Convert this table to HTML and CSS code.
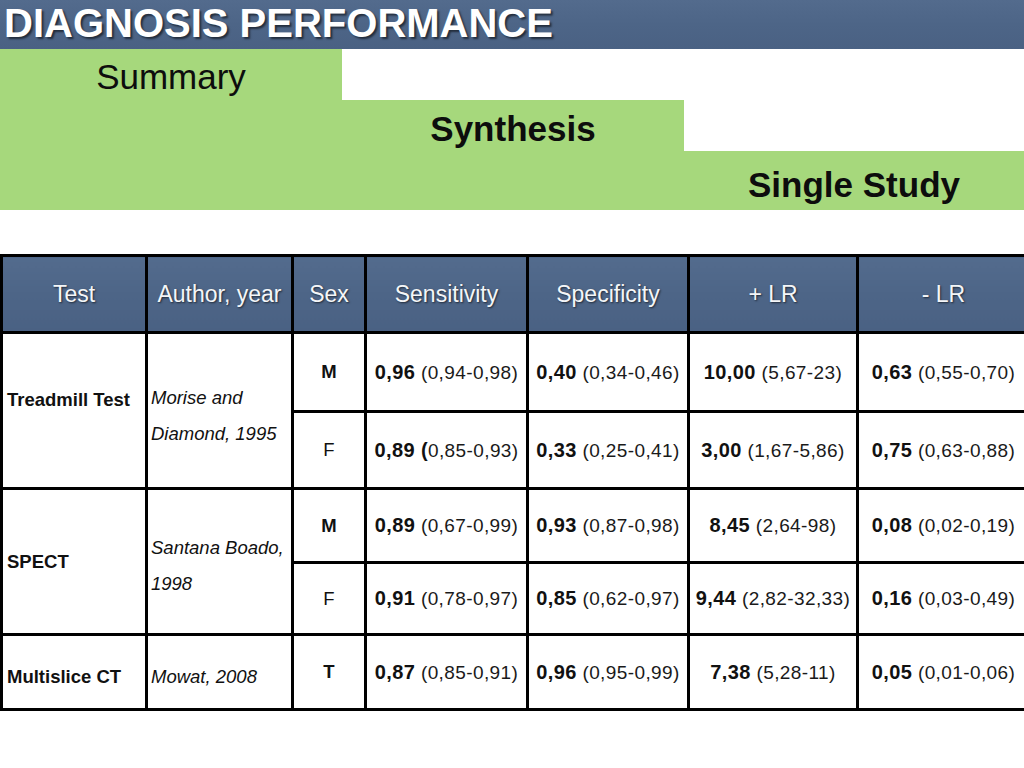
FILE: index.html
```html
<!DOCTYPE html>
<html>
<head>
<meta charset="utf-8">
<title>Diagnosis Performance</title>
<link rel="stylesheet" href="styles.css">
</head>
<body>
<header class="titlebar"><h1 class="title">DIAGNOSIS PERFORMANCE</h1></header>
<section class="steps">
  <div class="step step-1">
    <div class="cell green"><span class="label label-regular">Summary</span></div>
    <div class="cell"></div>
    <div class="cell"></div>
  </div>
  <div class="step step-2">
    <div class="cell green"></div>
    <div class="cell green"><span class="label">Synthesis</span></div>
    <div class="cell"></div>
  </div>
  <div class="step step-3">
    <div class="cell green"></div>
    <div class="cell green"></div>
    <div class="cell green"><span class="label">Single Study</span></div>
  </div>
</section>
<table class="data">
  <colgroup>
    <col class="c-test"><col class="c-author"><col class="c-sex"><col class="c-sens"><col class="c-spec"><col class="c-plr"><col class="c-nlr">
  </colgroup>
  <thead>
    <tr class="r-head">
      <th>Test</th><th>Author, year</th><th>Sex</th><th>Sensitivity</th><th>Specificity</th><th>+ LR</th><th>- LR</th>
    </tr>
  </thead>
  <tbody>
    <tr class="r-1">
      <td class="test test-tm" rowspan="2">Treadmill Test</td>
      <td class="author author-tm" rowspan="2">Morise and<br>Diamond, 1995</td>
      <td class="sex bold">M</td>
      <td class="val"><b>0,96</b> (0,94-0,98)</td>
      <td class="val"><b>0,40</b> (0,34-0,46)</td>
      <td class="val"><b>10,00</b> (5,67-23)</td>
      <td class="val"><b>0,63</b> (0,55-0,70)</td>
    </tr>
    <tr class="r-2">
      <td class="sex">F</td>
      <td class="val"><b>0,89 (</b>0,85-0,93)</td>
      <td class="val"><b>0,33</b> (0,25-0,41)</td>
      <td class="val"><b>3,00</b> (1,67-5,86)</td>
      <td class="val"><b>0,75</b> (0,63-0,88)</td>
    </tr>
    <tr class="r-3">
      <td class="test" rowspan="2">SPECT</td>
      <td class="author author-sp" rowspan="2">Santana Boado,<br>1998</td>
      <td class="sex bold">M</td>
      <td class="val"><b>0,89</b> (0,67-0,99)</td>
      <td class="val"><b>0,93</b> (0,87-0,98)</td>
      <td class="val"><b>8,45</b> (2,64-98)</td>
      <td class="val"><b>0,08</b> (0,02-0,19)</td>
    </tr>
    <tr class="r-4">
      <td class="sex">F</td>
      <td class="val"><b>0,91</b> (0,78-0,97)</td>
      <td class="val"><b>0,85</b> (0,62-0,97)</td>
      <td class="val"><b>9,44</b> (2,82-32,33)</td>
      <td class="val"><b>0,16</b> (0,03-0,49)</td>
    </tr>
    <tr class="r-5">
      <td class="test test-low">Multislice CT</td>
      <td class="author author-low">Mowat, 2008</td>
      <td class="sex bold">T</td>
      <td class="val"><b>0,87</b> (0,85-0,91)</td>
      <td class="val"><b>0,96</b> (0,95-0,99)</td>
      <td class="val"><b>7,38</b> (5,28-11)</td>
      <td class="val"><b>0,05</b> (0,01-0,06)</td>
    </tr>
  </tbody>
</table>
</body>
</html>
```
FILE: styles.css
```css
html, body {
  margin: 0;
  padding: 0;
  background: #ffffff;
  font-family: "Liberation Sans", Arial, sans-serif;
  color: #111;
  width: 1024px;
  overflow: hidden;
}

.titlebar {
  height: 49px;
  background: linear-gradient(180deg, #536b8d 0%, #4d6587 50%, #4a6183 100%);
  padding-left: 4px;
  box-sizing: border-box;
}

.title {
  margin: 0;
  font-size: 40px;
  font-weight: bold;
  line-height: 47px;
  color: #ffffff;
  text-shadow: 2px 2px 2px rgba(0, 0, 0, 0.55);
  white-space: nowrap;
}

.steps {
  display: flex;
  flex-direction: column;
}

.step {
  display: grid;
  grid-template-columns: 342px 342px 340px;
}

.step-1 { height: 51px; }
.step-2 { height: 51px; }
.step-3 { height: 59px; }

.cell {
  text-align: center;
  box-sizing: border-box;
}

.green {
  background: #a6d87c;
}

.label {
  display: block;
  font-size: 35px;
  font-weight: bold;
  line-height: 39px;
  color: #0d0d0d;
}

.label-regular {
  font-weight: normal;
}

.step-1 .label { padding-top: 8px; }
.step-2 .label { padding-top: 9px; }
.step-3 .label { padding-top: 14px; }

.data {
  margin-top: 44px;
  border-collapse: collapse;
  table-layout: fixed;
  width: 1028px;
}

.c-test { width: 145px; }
.c-author { width: 146px; }
.c-sex { width: 73px; }
.c-sens { width: 162px; }
.c-spec { width: 161px; }
.c-plr { width: 169px; }
.c-nlr { width: 172px; }

.data th, .data td {
  border: 3px solid #000;
  padding: 0;
  vertical-align: middle;
}

.r-head { height: 77px; }
.r-1 { height: 79px; }
.r-2 { height: 77px; }
.r-3 { height: 74px; }
.r-4 { height: 72px; }
.r-5 { height: 75px; }

.data th {
  background: linear-gradient(180deg, #536b8d 0%, #4d6587 50%, #4a6183 100%);
  color: #f4f6f8;
  font-weight: normal;
  font-size: 23px;
  text-align: center;
  text-shadow: 1px 1px 2px rgba(0, 0, 0, 0.6);
}

.test {
  font-weight: bold;
  font-size: 18.5px;
  text-align: left;
  padding-left: 4px !important;
}

.test-tm { padding-bottom: 22px !important; }
.test-low { padding-top: 10px !important; }

.author {
  font-style: italic;
  font-size: 18.5px;
  line-height: 36px;
  text-align: left;
  padding-left: 3px !important;
  color: #111;
}

.author-tm { padding-top: 10px !important; }
.author-sp { padding-top: 8px !important; }
.author-low { padding-top: 10px !important; }

.sex {
  text-align: center;
  font-size: 18.5px;
}

.bold { font-weight: bold; }

.val {
  text-align: center;
  font-size: 19px;
  letter-spacing: 0.4px;
  color: #1a1a1a;
  white-space: nowrap;
}

.val b {
  font-size: 20px;
  color: #111;
}
```
